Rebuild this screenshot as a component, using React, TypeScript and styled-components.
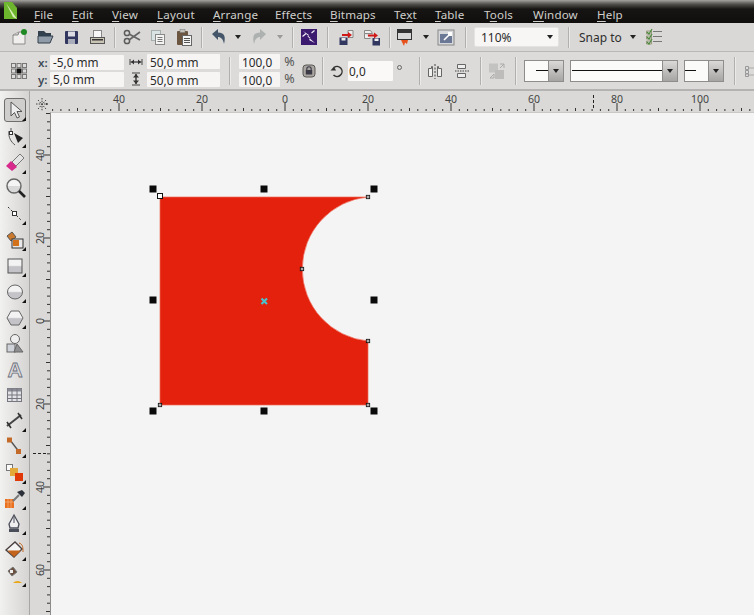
import React from "react";
import styled, { createGlobalStyle } from "styled-components";

const Global = createGlobalStyle`
  html, body { margin: 0; padding: 0; background: #f5f4f4; }
  * { box-sizing: border-box; }
`;

const Window = styled.div`
  width: 754px; height: 615px; overflow: hidden; display: flex; flex-direction: column;
  font-family: "Noto Sans", "Liberation Sans", sans-serif; font-size: 12px; color: #333; background: #dbdad8;
`;
const MenuBar = styled.div`
  height: 23px; display: flex; align-items: center; padding-top: 5px; flex: none;
  background: linear-gradient(#a5a3a0 0, #55534f 4px, #171513 9px, #0f0e0c 23px);
  color: #cfcecb; font-size: 11.6px; letter-spacing: 0.15px;
`;
const Logo = styled.svg`width: 34px; height: 23px; margin-top: -5px; flex: none;`;
const MenuItem = styled.div<{ $w: number }>`width: ${p => p.$w}px; flex: none; white-space: nowrap;`;
const Key = styled.span`text-decoration: underline; text-underline-offset: 2px;`;

const Toolbar = styled.div`
  height: 29px; flex: none; display: flex; align-items: center; padding-left: 6px;
  background: #d9d8d6; border-bottom: 1px solid #b9b8b6;
`;
const Slot = styled.div<{ $w: number }>`
  width: ${p => p.$w}px; height: 100%; flex: none; display: flex; align-items: center; justify-content: center;
`;
const Spacer = styled.div<{ $w: number }>`width: ${p => p.$w}px; flex: none;`;
const Sep = styled.div<{ $w: number; $h?: number }>`
  width: ${p => p.$w}px; align-self: center; height: ${p => p.$h || 21}px; flex: none;
  display: flex; justify-content: center;
  &::before { content: ""; width: 1px; height: 100%; background: #b1b0ae; box-shadow: 1px 0 0 #ebeae8; }
`;
const ZoomBox = styled.div`
  width: 85px; height: 20px; flex: none; margin-left: 1px; display: flex; align-items: center; justify-content: space-between;
  padding: 0 5px 0 6px; background: #f7f6f5; border: 1px solid #e4e3e1; border-radius: 2px; font-size: 12px; color: #2b2b2b;
`;
const SnapLabel = styled.div`width: 46px; margin-left: 2px; flex: none; font-size: 12px; color: #2e2e2e; white-space: nowrap;`;
const Caret = styled.div<{ $c?: string }>`
  width: 0; height: 0; flex: none;
  border-left: 3.5px solid transparent; border-right: 3.5px solid transparent;
  border-top: 4px solid ${p => p.$c || "#222"};
`;

const PropertyBar = styled.div`
  height: 39px; flex: none; display: flex; align-items: center; padding-left: 10px;
  background: #dcdbd9; border-bottom: 2px solid #b4b3b1;
`;
const Stack = styled.div<{ $w: number }>`
  width: ${p => p.$w}px; flex: none; display: flex; flex-direction: column; gap: 3px;
`;
const Line = styled.div<{ $pl?: number }>`display: flex; align-items: center; height: 14px; padding-left: ${p => p.$pl || 0}px;`;
const AxisLabel = styled.span`
  width: 12px; flex: none; font-weight: 600; font-size: 11.5px; color: #3c4a58;
`;
const Field = styled.div<{ $w: number }>`
  width: ${p => p.$w}px; height: 15px; flex: none; display: flex; align-items: center; padding-left: 3px;
  background: #f6f5f4; font-size: 11.8px; color: #2a2a2a; white-space: nowrap; border-radius: 1px;
`;
const TallField = styled(Field)`height: 20px; padding-left: 1px; background: #faf9f8;`;
const Percent = styled.div`height: 14px; line-height: 14px; font-size: 12.5px; color: #555; text-align: center;`;
const Degree = styled.div`
  width: 5px; height: 5px; flex: none; margin: -6px 0 0 4px; border: 1px solid #666; border-radius: 50%;
`;
const Picker = styled.div<{ $w: number }>`
  width: ${p => p.$w}px; height: 22px; flex: none; display: flex; align-items: stretch;
  background: #fbfbfa; border: 1px solid #8e8d8b;
`;
const PickerTrack = styled.div<{ $pl: number; $pr: number }>`
  flex: 1; display: flex; align-items: center; padding: 0 ${p => p.$pr}px 0 ${p => p.$pl}px;
  &::before { content: ""; flex: 1; height: 1.5px; background: #111; }
`;
const PickerButton = styled.div`
  width: 15px; flex: none; display: flex; align-items: center; justify-content: center;
  background: linear-gradient(#dad9d7, #a6a5a3); border-left: 1px solid #8e8d8b;
`;

const Workspace = styled.div`flex: 1; display: flex; min-height: 0;`;
const Toolbox = styled.div`
  width: 30px; flex: none; display: flex; flex-direction: column; padding-top: 7px;
  background: linear-gradient(90deg, #f1f1f0 0, #e0dfde 60%, #d5d4d2 100%); border-right: 1px solid #a8a7a5;
`;
const Tool = styled.div<{ $active?: boolean }>`
  width: 22px; height: 25.85px; flex: none; margin-left: 4px; display: flex; align-items: center; justify-content: center;
  ${p => p.$active ? "background: #cfcecd; border: 1px solid #6f6e6c; border-radius: 3px; height: 24px; margin-bottom: 1.85px;" : ""}
`;
const RulerGrid = styled.div`
  flex: 1; display: grid; grid-template-columns: 20px 1fr; grid-template-rows: 21px 1fr; min-width: 0;
  background: #dad9d7;
`;
const Canvas = styled.div`
  background: #f5f4f4; border-left: 1px solid #8d8c8a; border-top: 1px solid #c9c8c6; overflow: hidden;
`;
const Block = styled.svg`display: block;`;

/* ---------- icons ---------- */
const I = ({ s = 20, children }: { s?: number; children: React.ReactNode }) => (
  <svg width={s} height={s} viewBox={`0 0 ${s} ${s}`} style={{ display: "block", flex: "none" }}>{children}</svg>
);
const Fly = () => <polygon points="23,17 23,22 18,22" fill="#111" />;

const icons: Record<string, React.ReactNode> = {
  new: <I><path d="M4 8 L10 5 H16 V17 H4Z" fill="#f0efee" stroke="#8b8a88" /><path d="M4 8 L9 8 L10 5" fill="#ccc" stroke="#8b8a88" /><circle cx="15" cy="5" r="3" fill="#1f8a24" /></I>,
  open: <I><path d="M3 4 H9 L11 6 H16 V9 H3Z" fill="#33404e" /><path d="M3 9 H18 L15 16 H3Z" fill="#8f9ba6" stroke="#33404e" /></I>,
  save: <I><rect x="4" y="4" width="13" height="13" rx="1" fill="#31375f" /><rect x="7" y="4.5" width="7" height="5" fill="#dcdde4" /><rect x="7" y="12" width="7" height="5" fill="#a9acba" /></I>,
  print: <I><rect x="6.5" y="3.5" width="8" height="8" fill="#f7f7f7" stroke="#888" /><rect x="3.5" y="10.5" width="14" height="6" fill="#c9c4b4" stroke="#555" /><rect x="5" y="12" width="11" height="1.5" fill="#333" /></I>,
  cut: <I><circle cx="5" cy="6" r="2.6" fill="none" stroke="#5a5a5a" strokeWidth="1.5" /><circle cx="5" cy="14" r="2.6" fill="none" stroke="#5a5a5a" strokeWidth="1.5" /><path d="M7 7 L18 13 M7 13 L18 5" stroke="#666" strokeWidth="1.7" /></I>,
  copy: <I><rect x="3.5" y="3.5" width="9" height="10" fill="#d9e3e3" stroke="#a5b0ae" /><rect x="7.5" y="7.5" width="9" height="10" fill="#f4f4f2" stroke="#888" /><path d="M9.5 10.5h5M9.5 12.5h5M9.5 14.5h5" stroke="#777" /></I>,
  paste: <I><rect x="3" y="4" width="11" height="14" rx="1" fill="#6c5640" /><rect x="6" y="2.5" width="5" height="3" fill="#c5c2bb" stroke="#777" strokeWidth=".5" /><rect x="8.5" y="8.5" width="9" height="10" fill="#f5f5f3" stroke="#666" /><path d="M10 11.5h6M10 13.5h6M10 15.5h6" stroke="#555" /></I>,
  undo: <I><path d="M3 7 L9 2 V5.5 C15 5.5 17 9 15 17 C14 12 12 10 9 10 V13Z" fill="#46566a" /></I>,
  redo: <I><path d="M17 7 L11 2 V5.5 C5 5.5 3 9 5 17 C6 12 8 10 11 10 V13Z" fill="#adb1b0" /></I>,
  purple: <I><rect x="2" y="2" width="16" height="16" fill="#3c1a70" /><path d="M4 4 L10 8 L8.5 9.5 L16 16 L10 13 L11.5 11 Z" fill="#f3f0f6" /><path d="M3.5 9.5 L7 6.5 M12.5 6 L15.5 3.5" stroke="#f3f0f6" strokeWidth="1.2" /></I>,
  imp: <I><rect x="2.5" y="10.5" width="8" height="7.5" fill="#31375f" /><rect x="4.5" y="11" width="4" height="2.5" fill="#eee" /><path d="M11 3.5 h5 v7 h-5z" fill="#eee" stroke="#888" /><path d="M5 8 H13" stroke="#d01818" strokeWidth="2" /><polygon points="11,5 15,8 11,11" fill="#d01818" /></I>,
  exp: <I><path d="M2.5 3.5 h6 l2 3 h-8z M2.5 6.5 v5 h6" fill="#eee" stroke="#888" /><rect x="10.5" y="11" width="7.5" height="7.5" fill="#31375f" /><rect x="12.5" y="11.5" width="4" height="2.5" fill="#eee" /><path d="M6 8.5 H14" stroke="#d01818" strokeWidth="2" /><polygon points="12,5.5 16,8.5 12,11.5" fill="#d01818" /></I>,
  publish: <I><rect x="2.5" y="2.5" width="14" height="10" fill="#d8d8d8" stroke="#333" /><rect x="3" y="3" width="13" height="3" fill="#333" /><path d="M6 13 H13 L12 17 L10 15.5 L9 19 L7.5 16Z" fill="#e8501a" /></I>,
  launcher: <I><rect x="2" y="3" width="16" height="15" fill="#d6d8dc" stroke="#888" /><rect x="4" y="7" width="12" height="9" fill="#6a7896" /><path d="M8 13 L13 8" stroke="#fff" strokeWidth="1.6" /><rect x="12" y="5" width="4" height="4" fill="#fff" /></I>,
  check: <I><g fill="none" strokeWidth="1"><path d="M9 4.5h9M9 9.5h9M9 14.5h9" stroke="#777" /><path d="M2.5 4 h5 v3 h-5z M2.5 9 h5 v3 h-5z M2.5 14 h5 v3 h-5z" stroke="#9a9a80" /><path d="M3 5 L5 7 L8 2 M3 10 L5 12 L8 7 M3 15 L5 17 L8 12" stroke="#4c8a3c" strokeWidth="1.2" /></g></I>,
  origin: <I s={18}><g fill="none" stroke="#777"><rect x="1.5" y="1.5" width="4" height="4" /><rect x="7" y="1.5" width="4" height="4" /><rect x="12.5" y="1.5" width="4" height="4" /><rect x="1.5" y="7" width="4" height="4" /><rect x="12.5" y="7" width="4" height="4" /><rect x="1.5" y="12.5" width="4" height="4" /><rect x="7" y="12.5" width="4" height="4" /><rect x="12.5" y="12.5" width="4" height="4" /></g><rect x="6.5" y="6.5" width="5" height="5" fill="#111" /></I>,
  w: <I s={16}><path d="M2 5v6M14 5v6" stroke="#444" /><path d="M2.5 8H13.5" stroke="#333" strokeWidth="1.2" /><path d="M3 8l3-2.5v5zM13 8l-3-2.5v5z" fill="#333" /></I>,
  h: <I s={16}><path d="M4 2h8M4 14h8" stroke="#444" strokeWidth="1.2" /><path d="M8 3V13" stroke="#333" strokeWidth="1.4" /><path d="M8 3l-3 3.5h6zM8 13l-3-3.5h6z" fill="#333" /></I>,
  lock: <I s={16}><rect x="2" y="2" width="12" height="12" rx="3" fill="#a9a6a2" stroke="#5a5855" /><path d="M5.8 7.5V6a2.2 2.2 0 0 1 4.4 0v1.5" fill="none" stroke="#3d3a48" strokeWidth="1.1" /><rect x="4.8" y="7" width="6.4" height="4.5" fill="#3d3a48" /></I>,
  rotate: <I s={16}><path d="M5 4.5A5 5 0 1 1 4.5 12" fill="none" stroke="#333" strokeWidth="1.5" /><path d="M1.5 7.5H7L5 3.5Z" fill="#333" /></I>,
  mirrorH: <I><path d="M3.5 7.5h3v-2h1v10h-4z M16.5 7.5h-3v-2h-1v10h4z" fill="#f0f0ef" stroke="#666" /><path d="M10 3V18" stroke="#444" strokeDasharray="2 1.5" /></I>,
  mirrorV: <I><path d="M5.5 3.5h8v4h-8z M5.5 16.5h8v-4h-8z" fill="#eee" stroke="#666" /><path d="M3 10H18" stroke="#444" strokeDasharray="1.5 1" /></I>,
  combine: <I><rect x="2" y="2.5" width="9" height="9" fill="#c3c3c1" /><rect x="8" y="9" width="9" height="9" fill="#bdbcba" /><path d="M13 3h4v4M3 17h4v-4M17 3l-4 4M3 17l4-4" fill="none" stroke="#aaa" /></I>,
  ports: <I s={12}><path d="M1.5 1.5h3v3h-3zM1.5 5.5h3v3h-3zM1.5 9h3v2.5h-3z" fill="#ddd" stroke="#999" /><path d="M5 3h6M5 10h6" stroke="#aaa" /></I>,
};

const toolIcons: React.ReactNode[] = [
  <I s={22}><path d="M7 3 L7 17 L10.5 13.5 L13 19 L15.5 18 L13 12.5 L18 12.5Z" fill="#eee" stroke="#555" /><Fly /></I>,
  <I s={22}><path d="M7 2 V6 M5 5 C4 11 7 16 11 19" fill="none" stroke="#555" /><rect x="5.5" y="5.5" width="3" height="3" fill="#fff" stroke="#333" /><path d="M10 7 L19 12 L14 17Z" fill="#222" /><Fly /></I>,
  <I s={22}><path d="M8 10 L16 2 L20 6 L12 14Z" fill="#e4e4e4" stroke="#777" /><path d="M2 14 L7 9 L13 15 L8 19Z" fill="#d82a8c" /><Fly /></I>,
  <I s={22}><circle cx="10" cy="9" r="7" fill="#d9d9d9" stroke="#666" strokeWidth="1.4" /><path d="M4 9 A6 6 0 0 1 16 9Z" fill="#f5f5f5" /><path d="M15 14 L21 20" stroke="#222" strokeWidth="2.6" /></I>,
  <I s={22}><path d="M4 4 L18 18" stroke="#333" strokeDasharray="2 2" /><rect x="8.5" y="8.5" width="4" height="4" fill="#fff" stroke="#333" /><Fly /></I>,
  <I s={22}><path d="M3 7 L8 3 L12 8 L7 12Z" fill="#c97a2e" stroke="#555" /><rect x="8" y="10" width="11" height="9" fill="#e8e8e8" stroke="#333" /><rect x="9" y="11" width="6" height="6" fill="#d4721c" /><Fly /></I>,
  <I s={22}><defs><linearGradient id="tg" x1="0" y1="0" x2="0" y2="1"><stop offset="0.45" stopColor="#f3f3f3" /><stop offset="0.55" stopColor="#c4c4c8" /></linearGradient></defs><rect x="4" y="4" width="14" height="14" fill="url(#tg)" stroke="#555" /><Fly /></I>,
  <I s={22}><ellipse cx="11" cy="11" rx="7.5" ry="7" fill="url(#tg)" stroke="#666" /><Fly /></I>,
  <I s={22}><path d="M7 4 H15 L19 11 L15 18 H7 L3 11Z" fill="url(#tg)" stroke="#666" /><Fly /></I>,
  <I s={22}><circle cx="11" cy="6" r="4.5" fill="#eee" stroke="#666" /><rect x="3" y="11" width="8" height="8" fill="#cfd2d8" stroke="#666" /><path d="M13 11 L19 19 H10Z" fill="#8f9092" stroke="#666" /></I>,
  <svg width="22" height="22" viewBox="0 0 22 22" style={{ display: "block" }}><text x="11" y="19" textAnchor="middle" fontFamily="Liberation Sans, sans-serif" fontWeight="700" fontSize="21" fill="#dcdcde" stroke="#6b6f7c" strokeWidth=".8">A</text></svg>,
  <I s={22}><rect x="3.5" y="4.5" width="14" height="13" fill="#e2e2e6" stroke="#777780" /><rect x="3.5" y="4.5" width="14" height="3" fill="#8a8a94" /><path d="M3.5 11h14M3.5 14.5h14M8 4.5v13M13 4.5v13" stroke="#777780" /></I>,
  <I s={22}><path d="M3 16 L17 5" stroke="#444" strokeWidth="2" /><path d="M3 12l4 6M14 3l4 6" stroke="#333" strokeWidth="1.6" /><Fly /></I>,
  <I s={22}><path d="M6 4 L16 17" stroke="#555" strokeWidth="1.4" /><rect x="3" y="1.5" width="5" height="5" fill="#c46a28" /><rect x="12" y="13" width="5" height="5" fill="#c46a28" /><Fly /></I>,
  <I s={22}><rect x="2.5" y="2.5" width="6" height="6" fill="#fafafa" stroke="#777" /><rect x="6" y="6" width="8" height="8" fill="#e2a93a" /><rect x="11" y="11" width="8" height="8" fill="#e03808" /><Fly /></I>,
  <I s={22}><rect x="1" y="11" width="9" height="9" fill="#e8701e" /><path d="M1 14h9M4 11v9M7 11v9" stroke="#f7c090" strokeWidth=".6" /><path d="M9 13 L15 7" stroke="#777" strokeWidth="2" /><path d="M13 4 L18 9 L21 5 L18 2Z" fill="#2c3038" /><Fly /></I>,
  <I s={22}><path d="M10 2 L15 11 L14 15 H6 L5 11Z" fill="#f0f0f0" stroke="#4a4e58" strokeWidth="1.3" /><path d="M10 4V10" stroke="#4a4e58" /><rect x="5" y="16" width="10" height="3" fill="#4a4e58" /><Fly /></I>,
  <I s={22}><path d="M2 11 L11 3 L18 10 L10 18Z" fill="#f4f4f4" stroke="#4a4040" strokeWidth="1.4" /><path d="M3.5 11.5 H17 L10 18Z" fill="#c4641c" /><path d="M15 4 C19 5 19 9 19 13" fill="none" stroke="#c4641c" /><Fly /></I>,
  <I s={22}><path d="M4 6 L9 2 L13 7 L8 11Z" fill="#6a5040" stroke="#777" /><rect x="6" y="5" width="3" height="3" fill="#eee" /><path d="M9 18 A6 6 0 0 1 18 18Z" fill="#e8a818" /><Fly /></I>,
];

/* ---------- rulers ---------- */
const SCALE = 4.15;
const range = (a: number, b: number) => Array.from({ length: b - a + 1 }, (_, i) => a + i);
const hLabels = [[-40, "40"], [-20, "20"], [0, "0"], [20, "20"], [40, "40"], [60, "60"], [80, "80"], [100, "100"]] as const;
const vLabels = [[-40, "40"], [-20, "20"], [0, "0"], [20, "20"], [40, "40"], [60, "60"]] as const;

const HRuler = () => (
  <Block width={704} height={21} viewBox="50 91 704 21">
    {range(-28, 56).map(i => {
      const x = 285 + i * 2 * SCALE;
      const major = i % 10 === 0;
      return <rect key={i} x={x - 0.5} y={major ? 103 : i % 5 === 0 ? 108 : 109} width={1} height={major ? 8 : i % 5 === 0 ? 3 : 2} fill="#333" />;
    })}
    {hLabels.map(([v, t]) => (
      <text key={v} x={285 + v * SCALE} y={103} textAnchor="middle" fontSize="10.5" fontFamily="Noto Sans, sans-serif" fill="#444">{t}</text>
    ))}
    <path d="M593.5 95V110" stroke="#222" strokeDasharray="3 2" />
  </Block>
);
const Corner = () => (
  <Block width={20} height={21} viewBox="30 91 20 21">
    <path d="M38 100l8 9M38 109l8-9M42 98v13M36 104h12" stroke="#444" strokeDasharray="1.5 1.2" fill="none" />
    <path d="M46 103l2 1-2 1z" fill="#222" />
  </Block>
);
const VRuler = () => (
  <Block width={20} height={503} viewBox="30 112 20 503">
    {range(-25, 36).map(i => {
      const y = 321 + i * 2 * SCALE;
      const major = i % 10 === 0;
      return <rect key={i} x={major ? 43 : i % 5 === 0 ? 46 : 47} y={y - 0.5} width={major ? 7 : i % 5 === 0 ? 4 : 3} height={1} fill="#333" />;
    })}
    {vLabels.map(([v, t]) => {
      const y = 321 + v * SCALE;
      return <text key={v} transform={`translate(44 ${y}) rotate(-90)`} textAnchor="middle" fontSize="10.5" fontFamily="Noto Sans, sans-serif" fill="#444">{t}</text>;
    })}
    <path d="M33 453.5H48" stroke="#222" strokeDasharray="3 2" />
  </Block>
);

const handles = [[153, 189], [264, 189], [374, 189], [153, 300], [374, 300], [153, 411], [264, 411], [374, 411]];
const nodes = [[160, 405], [368, 405], [368, 341], [302, 269], [368, 197]];

const Drawing = () => (
  <Block width={703} height={502} viewBox="51 113 703 502">
    <path d="M160 197 H368 A72.3 72.3 0 0 0 368 341 V405 H160Z" fill="#e3210d" stroke="#ee6a5a" strokeWidth="0.7" />
    {handles.map(([x, y]) => <rect key={`${x}-${y}`} x={x - 3.5} y={y - 3.5} width={7} height={7} fill="#0a0a0a" />)}
    {nodes.map(([x, y]) => <rect key={`${x}.${y}`} x={x - 1.7} y={y - 1.7} width={3.4} height={3.4} fill="#aaa" stroke="#111" strokeWidth="0.8" />)}
    <rect x={157.5} y={193.5} width={5} height={5} fill="#fff" stroke="#111" />
    <path d="M261.5 298.5l5.5 5.5M267 298.5l-5.5 5.5" stroke="#4cc0cc" strokeWidth="2.2" />
  </Block>
);

export default function App() {
  return (
    <Window>
      <Global />
      <MenuBar>
        <Logo viewBox="0 0 34 23">
          <path d="M4 2 H12 L17 8 V19 H4Z" fill="#6cb52c" />
          <path d="M6 3 L15 16 L17 19 L13 17Z" fill="#d8efb8" />
        </Logo>
        <MenuItem $w={38}><Key>F</Key>ile</MenuItem>
        <MenuItem $w={40}><Key>E</Key>dit</MenuItem>
        <MenuItem $w={45}><Key>V</Key>iew</MenuItem>
        <MenuItem $w={56}><Key>L</Key>ayout</MenuItem>
        <MenuItem $w={62}><Key>A</Key>rrange</MenuItem>
        <MenuItem $w={55}>Effe<Key>c</Key>ts</MenuItem>
        <MenuItem $w={64}><Key>B</Key>itmaps</MenuItem>
        <MenuItem $w={41}>Te<Key>x</Key>t</MenuItem>
        <MenuItem $w={49}><Key>T</Key>able</MenuItem>
        <MenuItem $w={49}>T<Key>o</Key>ols</MenuItem>
        <MenuItem $w={64}><Key>W</Key>indow</MenuItem>
        <MenuItem $w={40}><Key>H</Key>elp</MenuItem>
      </MenuBar>

      <Toolbar>
        <Slot $w={26}>{icons.new}</Slot>
        <Slot $w={25}>{icons.open}</Slot>
        <Slot $w={27}>{icons.save}</Slot>
        <Slot $w={26}>{icons.print}</Slot>
        <Sep $w={8} />
        <Slot $w={27}>{icons.cut}</Slot>
        <Slot $w={26}>{icons.copy}</Slot>
        <Slot $w={26}>{icons.paste}</Slot>
        <Sep $w={8} />
        <Slot $w={28}>{icons.undo}</Slot>
        <Slot $w={10}><Caret /></Slot>
        <Slot $w={32}>{icons.redo}</Slot>
        <Slot $w={10}><Caret $c="#9a9a98" /></Slot>
        <Sep $w={14} />
        <Slot $w={20}>{icons.purple}</Slot>
        <Sep $w={16} />
        <Slot $w={23}>{icons.imp}</Slot>
        <Slot $w={27}>{icons.exp}</Slot>
        <Sep $w={8} />
        <Slot $w={24}>{icons.publish}</Slot>
        <Slot $w={18}><Caret /></Slot>
        <Slot $w={22}>{icons.launcher}</Slot>
        <Sep $w={16} />
        <ZoomBox>110%<Caret /></ZoomBox>
        <Sep $w={18} />
        <SnapLabel>Snap to</SnapLabel>
        <Slot $w={16}><Caret /></Slot>
        <Slot $w={26}>{icons.check}</Slot>
      </Toolbar>

      <PropertyBar>
        <Slot $w={18}>{icons.origin}</Slot>
        <Stack $w={96}>
          <Line $pl={10}><AxisLabel>x:</AxisLabel><Field $w={74}>-5,0 mm</Field></Line>
          <Line $pl={10}><AxisLabel>y:</AxisLabel><Field $w={74}>5,0 mm</Field></Line>
        </Stack>
        <Stack $w={23}>
          <Line><Slot $w={23}>{icons.w}</Slot></Line>
          <Line><Slot $w={23}>{icons.h}</Slot></Line>
        </Stack>
        <Stack $w={73}>
          <Field $w={73}>50,0 mm</Field>
          <Field $w={73}>50,0 mm</Field>
        </Stack>
        <Sep $w={19} $h={28} />
        <Stack $w={41}>
          <Field $w={41}>100,0</Field>
          <Field $w={41}>100,0</Field>
        </Stack>
        <Stack $w={19}>
          <Percent>%</Percent>
          <Percent>%</Percent>
        </Stack>
        <Slot $w={20}>{icons.lock}</Slot>
        <Sep $w={6} $h={28} />
        <Slot $w={23}>{icons.rotate}</Slot>
        <TallField $w={45}>0,0</TallField>
        <Degree />
        <Spacer $w={11} />
        <Sep $w={12} $h={28} />
        <Slot $w={20}>{icons.mirrorH}</Slot>
        <Slot $w={34}>{icons.mirrorV}</Slot>
        <Sep $w={2} $h={28} />
        <Slot $w={32}>{icons.combine}</Slot>
        <Sep $w={4} $h={28} />
        <Spacer $w={7} />
        <Picker $w={40}><PickerTrack $pl={11} $pr={0} /><PickerButton><Caret /></PickerButton></Picker>
        <Spacer $w={6} />
        <Picker $w={108}><PickerTrack $pl={1} $pr={0} /><PickerButton><Caret /></PickerButton></Picker>
        <Spacer $w={6} />
        <Picker $w={40}><PickerTrack $pl={0} $pr={12} /><PickerButton><Caret /></PickerButton></Picker>
        <Sep $w={20} $h={28} />
        <Slot $w={12}>{icons.ports}</Slot>
      </PropertyBar>

      <Workspace>
        <Toolbox>
          {toolIcons.map((ic, i) => <Tool key={i} $active={i === 0}>{ic}</Tool>)}
        </Toolbox>
        <RulerGrid>
          <Corner />
          <HRuler />
          <VRuler />
          <Canvas><Drawing /></Canvas>
        </RulerGrid>
      </Workspace>
    </Window>
  );
}
